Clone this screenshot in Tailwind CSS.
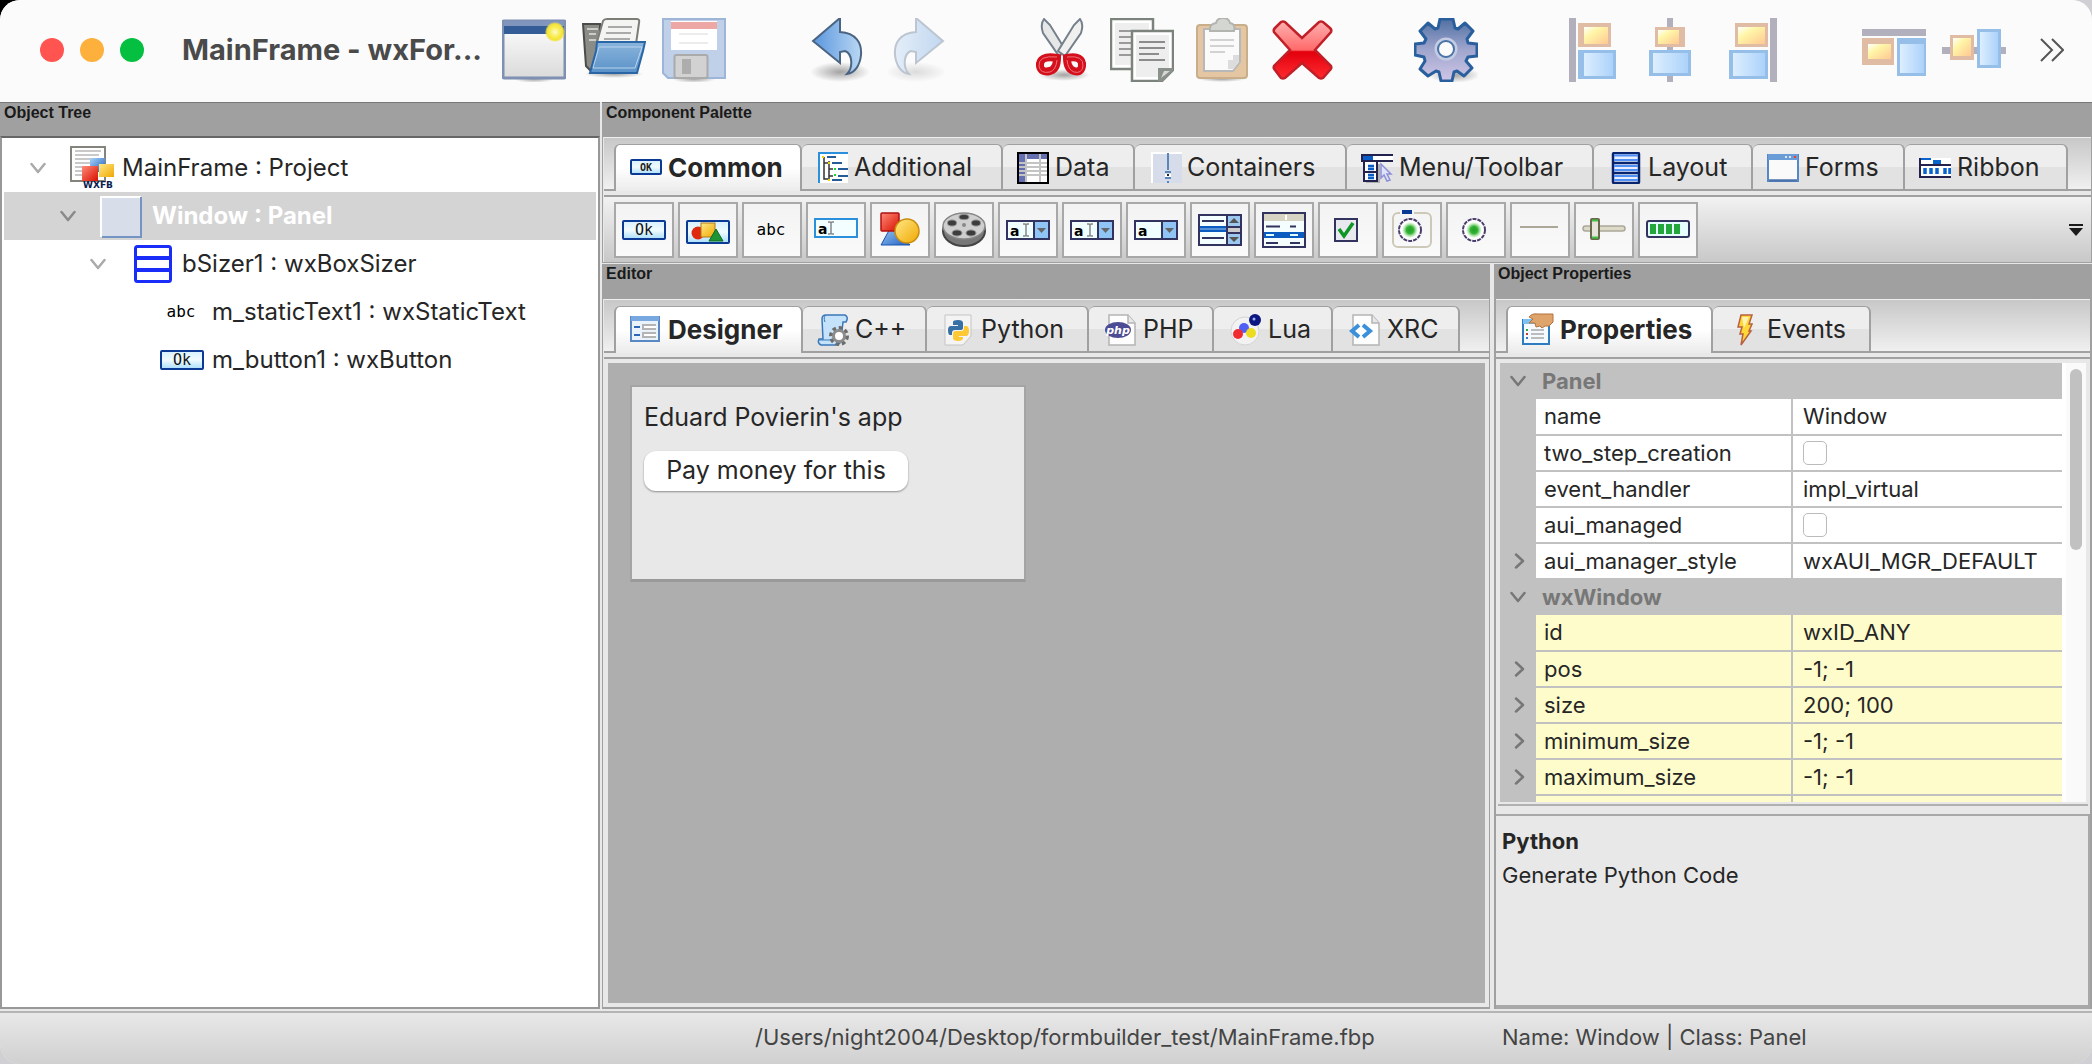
<!DOCTYPE html>
<html lang="en">
<head>
<meta charset="utf-8">
<title>MainFrame - wxFormBuilder</title>
<script src="https://cdn.jsdelivr.net/npm/@tailwindcss/browser@4"></script>
</head>
<body class="h-screen overflow-hidden bg-[radial-gradient(circle_at_0_0,#000_0_40px,#d0d0d4_60px)] font-['Inter',sans-serif] text-[#262626]">

<!-- Shared glyphs and gradients -->
<svg class="absolute h-0 w-0" aria-hidden="true">
  <defs>
    <linearGradient id="blu" x1="0" y1="0" x2="0" y2="1"><stop offset="0" stop-color="#d6f0ff"/><stop offset=".5" stop-color="#f0fbff"/><stop offset="1" stop-color="#a9defc"/></linearGradient>
    <linearGradient id="gry" x1="0" y1="0" x2="0" y2="1"><stop offset="0" stop-color="#ffffff"/><stop offset="1" stop-color="#dadada"/></linearGradient>
    <linearGradient id="fold" x1="0" y1="0" x2="0" y2="1"><stop offset="0" stop-color="#8ab4dc"/><stop offset="1" stop-color="#5a92c8"/></linearGradient>
    <linearGradient id="arr" x1="0" y1="0" x2="1" y2="0"><stop offset="0" stop-color="#5a96de"/><stop offset="1" stop-color="#b9d7f3"/></linearGradient>
    <linearGradient id="redx" x1="0" y1="0" x2="0" y2="1"><stop offset="0" stop-color="#ffb0b0"/><stop offset=".5" stop-color="#ff6a6a"/><stop offset=".53" stop-color="#e2000c"/><stop offset="1" stop-color="#ff2a30"/></linearGradient>
    <linearGradient id="gear" x1="0" y1="0" x2="0" y2="1"><stop offset="0" stop-color="#5070a2"/><stop offset=".5" stop-color="#a0a6ce"/><stop offset="1" stop-color="#cfc6e6"/></linearGradient>
    <linearGradient id="org" x1="0" y1="0" x2="1" y2="1"><stop offset="0" stop-color="#ffffff"/><stop offset=".35" stop-color="#fff6a8"/><stop offset="1" stop-color="#ffc892"/></linearGradient>
    <linearGradient id="sky" x1="0" y1="0" x2="1" y2="0"><stop offset="0" stop-color="#dceefe"/><stop offset="1" stop-color="#acd2fa"/></linearGradient>
    <linearGradient id="gold" x1="0" y1="0" x2="1" y2="1"><stop offset="0" stop-color="#ffe888"/><stop offset="1" stop-color="#f0a800"/></linearGradient>
    <linearGradient id="red" x1="0" y1="0" x2="1" y2="1"><stop offset="0" stop-color="#ff8a78"/><stop offset="1" stop-color="#d81000"/></linearGradient>
    <linearGradient id="azu" x1="0" y1="0" x2="1" y2="1"><stop offset="0" stop-color="#a8d4f8"/><stop offset="1" stop-color="#1c5cc0"/></linearGradient>
    <radialGradient id="shade"><stop offset="0" stop-color="#000" stop-opacity=".35"/><stop offset="1" stop-color="#000" stop-opacity="0"/></radialGradient>
    <radialGradient id="sun"><stop offset="0" stop-color="#fffbd0"/><stop offset=".5" stop-color="#f8ec50"/><stop offset=".8" stop-color="#f4e23a"/><stop offset="1" stop-color="#f4e23a" stop-opacity=".2"/></radialGradient>
    <radialGradient id="led"><stop offset="0" stop-color="#1fa024"/><stop offset=".45" stop-color="#35b235"/><stop offset=".75" stop-color="#b4e8b0"/><stop offset="1" stop-color="#ffffff"/></radialGradient>
    <symbol id="undo" viewBox="0 0 64 64">
      <ellipse cx="34" cy="54" rx="30" ry="10" fill="url(#shade)"/>
      <path d="M7 23 34 0V14C50 15 56 25 55 37 54 47 49 55 41 56 47 50 47 36 39 33L34 34V45Z" fill="url(#arr)" stroke="#4a6482" stroke-width="2"/>
    </symbol>
    <symbol id="okbtn" viewBox="0 0 44 20">
      <rect x="1" y="1" width="42" height="18" rx="1" fill="url(#blu)" stroke="#0a3a94" stroke-width="2"/>
      <text x="22" y="15" text-anchor="middle" font-family="DejaVu Sans Mono, monospace" font-size="15" fill="#111">Ok</text>
    </symbol>
    <symbol id="combo" viewBox="0 0 44 20">
      <rect x="1" y="1" width="42" height="18" fill="#f0feff" stroke="#33335f" stroke-width="2"/>
      <rect x="29" y="2" width="13" height="16" fill="#8fc4f4"/><path d="M28 1V19" stroke="#33335f" stroke-width="2"/>
      <path d="M31 8H40L35.500 13Z" fill="#666"/>
      <text x="4" y="16" font-family="DejaVu Sans, sans-serif" font-weight="700" font-size="14" fill="#000">a</text>
    </symbol>
    <symbol id="ibeam" viewBox="0 0 8 14"><path d="M1 1H3L4 2 5 1H7M4 2V12M1 13H3L4 12 5 13H7" fill="none" stroke="#888" stroke-width="1.500"/></symbol>
    <symbol id="radio" viewBox="0 0 24 24"><circle cx="12" cy="12" r="11" fill="#fff" stroke="#4b3e6c" stroke-width="2" stroke-dasharray="4 1"/><circle cx="12" cy="12" r="8" fill="url(#led)"/></symbol>
    <symbol id="down" viewBox="0 0 16 16"><path d="M1.500 4 8 12 14.500 4" fill="none" stroke="currentColor" stroke-width="2.500" stroke-linecap="round" stroke-linejoin="round"/></symbol>
    <symbol id="right" viewBox="0 0 16 16"><path d="M4 1.500 11 8 4 14.500" fill="none" stroke="currentColor" stroke-width="2.500" stroke-linecap="round" stroke-linejoin="round"/></symbol>
    <symbol id="doc" viewBox="0 0 32 32"><path d="M4 1H23L30 9V31H4Z" fill="#fdfdfd" stroke="#b4b4b4" stroke-width="1.500"/><path d="M23 1V9H30" fill="#e8e8e8" stroke="#b4b4b4" stroke-width="1.500"/></symbol>
  </defs>
</svg>

<div class="flex h-full flex-col overflow-hidden rounded-[20px] bg-[#e8e8e8]">

  <!-- Title bar -->
  <header class="flex h-[102px] shrink-0 items-center bg-[#fbfbfb] pr-6 pl-10 pb-0.5">
    <div class="flex gap-4">
      <button aria-label="Close" class="size-6 rounded-full bg-[#ff5450]"></button>
      <button aria-label="Minimize" class="size-6 rounded-full bg-[#fdb03c]"></button>
      <button aria-label="Zoom" class="size-6 rounded-full bg-[#05c040]"></button>
    </div>
    <h1 class="ml-[38px] w-[320px] text-[29px] font-bold text-[#4a4a4a]">MainFrame - wxFor...</h1>
    <nav aria-label="Main toolbar" class="flex flex-1 gap-20">
      <div class="flex gap-4">
        <button aria-label="New"><svg class="size-16" viewBox="0 0 64 64"><ellipse cx="32" cy="61" rx="20" ry="4" fill="url(#shade)"/><rect x="1" y="3" width="62" height="57" rx="1" fill="url(#gry)" stroke="#7f90b2" stroke-width="3"/><rect x="2" y="3" width="60" height="5" fill="#8096bd"/><rect x="2" y="8" width="60" height="8" fill="#345c96"/><circle cx="53" cy="14" r="10" fill="url(#sun)"/></svg></button>
        <button aria-label="Open"><svg class="size-16" viewBox="0 0 64 64"><ellipse cx="32" cy="56" rx="30" ry="4" fill="url(#shade)"/><path d="M1 6H18V24L9 53 4 48Z" fill="#8c8c86" stroke="#4c4c4c" stroke-width="2"/><path d="M5 11H16M7 16H14M7 22H14" stroke="#ccc" stroke-width="2"/><path d="M15 24 21 3Q22 1 25 1H55Q58 1 57 5L54 26Z" fill="#f4f4f2" stroke="#7d7d78" stroke-width="2"/><path d="M26 9H50M24 15H49M22 21H48" stroke="#aaa" stroke-width="2"/><path d="M15 24H63L61 33 55 55H8L14 33Z" fill="url(#fold)" stroke="#2a66a6" stroke-width="2"/><path d="M17 29H60L53 50H11Z" fill="none" stroke="#b8d4ec" stroke-width="1"/></svg></button>
        <button aria-label="Save"><svg class="size-16" viewBox="0 0 64 64"><ellipse cx="32" cy="61" rx="22" ry="4" fill="url(#shade)"/><path d="M1 1H63V60H6L1 55Z" fill="#bfd0e8" stroke="#9db6d8" stroke-width="2"/><rect x="9" y="3" width="46" height="29" fill="#fff"/><rect x="9" y="4" width="46" height="7" fill="#eda8a6"/><path d="M17 16H46M17 25H46" stroke="#ececec" stroke-width="2"/><rect x="12.500" y="37" width="33" height="23" rx="2" fill="#d2d2d2" stroke="#aaa" stroke-width="2"/><rect x="20" y="41" width="9" height="15" fill="#adadad"/></svg></button>
      </div>
      <div class="flex gap-4">
        <button aria-label="Undo"><svg class="size-16"><use href="#undo"/></svg></button>
        <button aria-label="Redo" disabled class="opacity-35"><svg class="size-16 -scale-x-100"><use href="#undo"/></svg></button>
      </div>
      <div class="flex gap-4">
        <button aria-label="Cut"><svg class="size-16" viewBox="0 0 64 64"><ellipse cx="34" cy="57" rx="26" ry="6" fill="url(#shade)"/><path d="M14 1Q10 6 13 15L29 38 36 33 20 7Z" fill="#e6e8e8" stroke="#75808c" stroke-width="2"/><path d="M50 1Q54 6 51 15L35 38 28 33 44 7Z" fill="#f0f0ee" stroke="#75808c" stroke-width="2"/><g fill="none" stroke="#d4101c" stroke-width="8"><path d="M27 40Q9 37 10 48 11 55 20 53 27 51 27 40Z"/><path d="M37 40Q53 37 52 48 51 55 44 53 37 51 37 40Z"/></g><g fill="none" stroke="#f0727a" stroke-width="1"><path d="M27 39Q8 37 9 48 10 56 20 54 26 52 27 42"/><path d="M37 39Q54 37 53 48 52 56 44 54 38 52 37 42"/></g></svg></button>
        <button aria-label="Copy"><svg class="size-16" viewBox="0 0 64 64"><rect x="1" y="1" width="42" height="50" fill="#fff" stroke="#7c827c" stroke-width="2.500"/><rect x="5" y="5" width="34" height="42" fill="#eee"/><path d="M9 13H34M9 19H34M9 25H34M9 31H34M9 37H34" stroke="#9a9a9a" stroke-width="2"/><path d="M22 13H63V52L52 63H22Z" fill="#fff" stroke="#7c827c" stroke-width="2.500"/><path d="M26 17H59V50H48V59H26Z" fill="#eee"/><path d="M29 24H55M29 30H55M29 36H49M29 42H55" stroke="#8c8c8c" stroke-width="2"/><path d="M48 63V50H63V53L53 63Z" fill="#8a908a"/><path d="M51 60 54 53H60Z" fill="#d8d8d8"/></svg></button>
        <button aria-label="Paste"><svg class="size-16" viewBox="0 0 64 64"><ellipse cx="32" cy="61" rx="24" ry="3" fill="url(#shade)"/><rect x="7" y="7" width="50" height="53" rx="3" fill="#e4c6a2" stroke="#c8ae8a" stroke-width="2"/><path d="M14 11H50V44L43 53H14Z" fill="#fafafa" stroke="#b8b8b8" stroke-width="2"/><path d="M20 22H44M20 28H44M20 34H35" stroke="#d2d2d2" stroke-width="2"/><path d="M38 51V42H43V37H49V44L43 51Z" fill="#dcdcdc"/><path d="M20 13Q19 6 26 5 27 0 33 0 39 0 40 5 46 6 44 13Z" fill="#d4d6d2" stroke="#b2b4b0" stroke-width="2"/></svg></button>
        <button aria-label="Delete"><svg class="size-16" viewBox="0 0 64 64"><path d="M4 14Q3 12 5 10L11 4Q13 3 15 4L32 20 49 4Q51 3 53 4L60 10Q62 12 61 14L45 32 61 48Q62 50 60 52L53 60Q51 61 49 60L32 45 15 60Q13 61 11 60L5 52Q3 50 4 48L20 32Z" fill="url(#redx)" stroke="#c02028" stroke-width="2.500"/></svg></button>
      </div>
      <div class="flex">
        <button aria-label="Generate code"><svg class="size-16" viewBox="0 0 64 64"><ellipse cx="40" cy="57" rx="26" ry="8" fill="url(#shade)"/><path d="M26 1H39L41 10 44 11 51 5 59 13 53 21 54 25 63 26V38L54 39 52 43 58 50 50 58 43 53 40 54 38 63H27L25 54 22 53 14 58 6 51 11 43 10 39 1 37V26L10 25 12 21 6 13 14 5 21 11 24 10Z" fill="url(#gear)" stroke="#2a5f9e" stroke-width="3" stroke-linejoin="round"/><circle cx="32" cy="31" r="10" fill="none" stroke="#c4cce4" stroke-width="3"/><circle cx="32" cy="31" r="8" fill="#fbfbfb" stroke="#4a74a8" stroke-width="2"/></svg></button>
      </div>
      <div class="flex gap-4">
        <button aria-label="Align left"><svg class="size-16" viewBox="0 0 64 64"><rect x="11" width="7" height="64" fill="#b2b0bd"/><rect x="20" y="5" width="33" height="24" fill="#e0bca4"/><rect x="26" y="9" width="24" height="17" fill="url(#org)"/><rect x="20" y="32" width="38" height="29" fill="#95bfe8"/><rect x="26" y="35" width="29" height="23" fill="url(#sky)"/></svg></button>
        <button aria-label="Align centre"><svg class="size-16" viewBox="0 0 64 64"><rect x="29" width="6" height="64" fill="#b2b0bd"/><rect x="17" y="9" width="30" height="20" fill="#e0bca4"/><rect x="20" y="12" width="21" height="14" fill="url(#org)"/><rect x="11" y="32" width="42" height="26" fill="#95bfe8"/><rect x="15" y="35" width="35" height="20" fill="url(#sky)"/></svg></button>
        <button aria-label="Align right"><svg class="size-16" viewBox="0 0 64 64"><rect x="52" width="7" height="64" fill="#b2b0bd"/><rect x="17" y="5" width="33" height="24" fill="#e0bca4"/><rect x="20" y="9" width="27" height="17" fill="url(#org)"/><rect x="11" y="32" width="39" height="29" fill="#95bfe8"/><rect x="15" y="35" width="32" height="23" fill="url(#sky)"/></svg></button>
      </div>
      <div class="flex gap-4">
        <button aria-label="Align top"><svg class="size-16" viewBox="0 0 64 64"><rect y="11" width="64" height="7" fill="#b2b0bd"/><rect y="20" width="32" height="27" fill="#e0bca4"/><rect x="6" y="26" width="23" height="15" fill="url(#org)"/><rect x="35" y="20" width="29" height="38" fill="#95bfe8"/><rect x="38" y="26" width="24" height="29" fill="url(#sky)"/></svg></button>
        <button aria-label="Align middle"><svg class="size-16" viewBox="0 0 64 64"><rect y="29" width="64" height="7" fill="#b2b0bd"/><rect x="8" y="17" width="24" height="25" fill="#e0bca4"/><rect x="11" y="20" width="18" height="18" fill="url(#org)"/><rect x="35" y="11" width="24" height="39" fill="#95bfe8"/><rect x="38" y="14" width="18" height="33" fill="url(#sky)"/></svg></button>
      </div>
    </nav>
    <button aria-label="More tools" class="mr-1"><svg class="h-6 w-6" viewBox="0 0 24 24"><path d="M1 1 12 12 1 23M12 1 23 12 12 23" fill="none" stroke="#555" stroke-width="2"/></svg></button>
  </header>

  <main class="flex min-h-0 flex-1">

    <!-- Object tree -->
    <section class="flex w-[600px] shrink-0 flex-col">
      <h2 class="h-[34px] shrink-0 border-t border-[#777] bg-[#a0a0a0] pl-1 font-['Liberation_Sans',sans-serif] text-base/5 font-bold text-[#1a1a1a]">Object Tree</h2>
      <ul class="mb-0.5 flex-1 border-2 border-[#989898] border-t-[#666] bg-white px-0.5 pt-1.5 text-2xl">
        <li class="flex h-12 items-center gap-2 pl-[26px]"><svg class="mr-4 size-4 text-[#aaa]"><use href="#down"/></svg>
          <svg class="size-11" viewBox="0 0 44 44"><rect x="1" y="1" width="34" height="34" fill="#fff" stroke="#84847c" stroke-width="2"/><path d="M5 5H31M5 9H29M5 13H31M5 17H24M5 21H22M5 25H14M5 29H14" stroke="#b8b8b8" stroke-width="1.500"/><rect x="20" y="12" width="15" height="14" fill="url(#azu)"/><rect x="12" y="20" width="16" height="15" fill="url(#red)"/><rect x="29" y="18" width="15" height="13" fill="url(#gold)"/><text x="28" y="42" text-anchor="middle" font-family="DejaVu Sans, sans-serif" font-weight="700" font-size="9" fill="#0a1e50">WXFB</text></svg>
          <span>MainFrame : Project</span></li>
        <li class="flex h-12 items-center gap-2 bg-[#d4d4d4] pl-14 font-bold text-white"><svg class="mr-4 size-4 text-[#8a8a8a]"><use href="#down"/></svg>
          <svg class="size-11" viewBox="0 0 44 44"><rect x="1" y="3" width="40" height="40" fill="#d8dee9"/><path d="M1 43V3H41" fill="none" stroke="#fff" stroke-width="2"/><path d="M41 3V43H2" fill="none" stroke="#7495c4" stroke-width="2"/></svg>
          <span>Window : Panel</span></li>
        <li class="flex h-12 items-center gap-2 pl-[86px]"><svg class="mr-4 size-4 text-[#aaa]"><use href="#down"/></svg>
          <svg class="size-11" viewBox="0 0 44 44"><rect x="5.500" y="4.500" width="35" height="35" rx="2" fill="#fff" stroke="#1a2cf8" stroke-width="3"/><path d="M5 16H40M5 28H40" stroke="#1a2cf8" stroke-width="4"/></svg>
          <span>bSizer1 : wxBoxSizer</span></li>
        <li class="flex h-12 items-center gap-2 pl-[156px]">
          <svg class="size-11" viewBox="0 0 44 44"><text x="21" y="27" text-anchor="middle" font-family="DejaVu Sans Mono, monospace" font-size="16" fill="#000">abc</text></svg>
          <span>m_staticText1 : wxStaticText</span></li>
        <li class="flex h-12 items-center gap-2 pl-[156px]">
          <svg class="h-5 w-11"><use href="#okbtn"/></svg>
          <span>m_button1 : wxButton</span></li>
      </ul>
    </section>

    <div class="ml-0.5 flex min-w-0 flex-1 flex-col">

      <!-- Component palette -->
      <section class="shrink-0">
        <h2 class="h-[35px] border-t border-[#777] bg-[#a0a0a0] pl-1 font-['Liberation_Sans',sans-serif] text-base/5 font-bold text-[#1a1a1a]">Component Palette</h2>
        <div class="border-x border-b border-[#a0a0a0] pl-px">
          <div role="tablist" class="flex h-[54px] items-end border-t border-b-2 border-t-[#eee] border-b-[#a0a0a0] bg-linear-to-b from-[#c8c8c8] to-[#f0f0f0] pl-2.5 text-[25px]">
            <button role="tab" aria-selected="true" class="-mb-0.5 flex h-[47px] w-[188px] items-center gap-1.5 rounded-t-md border-x-2 border-t border-[#a0a0a0] bg-linear-to-b from-white from-50% to-[#ebebeb] pb-0.5 pl-3.5 text-[26px] font-bold"><svg class="h-4 w-8" viewBox="0 0 32 16"><rect x="1" y="1" width="30" height="14" rx="1" fill="url(#blu)" stroke="#0a3a94" stroke-width="2"/><text x="16" y="12" text-anchor="middle" font-family="DejaVu Sans Mono, monospace" font-size="10" fill="#222">OK</text></svg>Common</button>
            <button role="tab" class="flex h-[45px] w-[201px] items-center gap-1 rounded-t-md border-t border-r-2 border-[#a0a0a0] bg-linear-to-b from-[#eee] from-50% to-[#e2e2e2] to-50% pt-0.5 pl-4"><svg class="size-8" viewBox="0 0 32 32"><path d="M0 0H30V31H0Z" fill="#fff"/><path d="M1 31V1H30" fill="none" stroke="#2b90dc" stroke-width="2"/><path d="M6 5V27H10M6 11H10M11 9V27M11 17H15M11 24H15" fill="none" stroke="#333" stroke-width="1.500"/><path d="M9 5H18M14 11H24M20 17H30M20 24H30M14 28H24" stroke="#245c98" stroke-width="2"/><path d="M4 5H6M10 11H12M10 28H12" stroke="#e8d800" stroke-width="2"/><path d="M16 17H18M16 23H18" stroke="#18d840" stroke-width="2"/></svg>Additional</button>
            <button role="tab" class="flex h-[45px] w-[132px] items-center gap-1.5 rounded-t-md border-t border-r-2 border-[#a0a0a0] bg-linear-to-b from-[#eee] from-50% to-[#e2e2e2] to-50% pt-0.5 pl-3.5"><svg class="size-8" viewBox="0 0 32 32"><rect x="1" y="1" width="30" height="30" fill="#fff" stroke="#000" stroke-width="2"/><path d="M2 2H30V7H8V30H2Z" fill="#6470b0"/><path d="M2 11H30M2 15H30M2 19H30M2 23H30M9 2V30M23 2V30" stroke="#c4c4c4" stroke-width="2"/></svg>Data</button>
            <button role="tab" class="flex h-[45px] w-[212px] items-center gap-1 rounded-t-md border-t border-r-2 border-[#a0a0a0] bg-linear-to-b from-[#eee] from-50% to-[#e2e2e2] to-50% pt-0.5 pl-4"><svg class="size-8" viewBox="0 0 32 32"><rect x="1" y="1" width="30" height="30" fill="#d6dce9"/><path d="M1 31V1H31" stroke="#fff" stroke-width="2" fill="none"/><path d="M17 1V18M14 20H20M14 26H20M17 29V31" stroke="#5a86b8" stroke-width="2"/><rect x="14" y="22" width="6" height="3" fill="#fff"/><rect x="16" y="22" width="2" height="2" fill="#223"/></svg>Containers</button>
            <button role="tab" class="flex h-[45px] w-[247px] items-center gap-1.5 rounded-t-md border-t border-r-2 border-[#a0a0a0] bg-linear-to-b from-[#eee] from-50% to-[#e2e2e2] to-50% pt-0.5 pl-3.5"><svg class="size-8" viewBox="0 0 32 32"><rect x="1" y="3" width="31" height="6" fill="#fff"/><path d="M32 3H1V9H32" fill="none" stroke="#22224c" stroke-width="2"/><rect x="2" y="4" width="10" height="4" fill="#0a5cc8"/><path d="M5 30H18V12" fill="none" stroke="#b0b0b0" stroke-width="2"/><rect x="3" y="9" width="13" height="20" fill="#fff" stroke="#22224c" stroke-width="2"/><path d="M7 14H13M7 17H13M7 23H13M7 26H13" stroke="#0a5cc8" stroke-width="2.500"/><path d="M3 20H16" stroke="#22224c" stroke-width="2"/><path d="M20 12V26L23 23 26 29 29 28 26 22H30Z" fill="#dfe2fa" stroke="#8b8fd6" stroke-width="1.500"/></svg>Menu/Toolbar</button>
            <button role="tab" class="flex h-[45px] w-[159px] items-center gap-1.5 rounded-t-md border-t border-r-2 border-[#a0a0a0] bg-linear-to-b from-[#eee] from-50% to-[#e2e2e2] to-50% pt-0.5 pl-4"><svg class="size-8" viewBox="0 0 32 32"><rect x="3" y="1" width="26" height="30" rx="1" fill="#e8f0ff" stroke="#08246e" stroke-width="2.500"/><path d="M4 3.500H28M4 8H28M4 14H28M4 18H28M4 24H28M4 28H28" stroke="#5090f4" stroke-width="2"/><path d="M3 11H29M3 21H29" stroke="#08246e" stroke-width="2.500"/></svg>Layout</button>
            <button role="tab" class="flex h-[45px] w-[152px] items-center gap-1.5 rounded-t-md border-t border-r-2 border-[#a0a0a0] bg-linear-to-b from-[#eee] from-50% to-[#e2e2e2] to-50% pt-0.5 pl-3.5"><svg class="size-8" viewBox="0 0 32 32"><rect x="1" y="3" width="30" height="26" fill="#fafafa" stroke="#5588c8" stroke-width="2"/><rect x="1" y="2" width="30" height="6" fill="#6a9cd8"/><path d="M18 5H20M22 5H24" stroke="#dde8f6" stroke-width="2"/><path d="M27 5H29" stroke="#f04030" stroke-width="2"/><path d="M2 28.500H30" stroke="#4c74ac" stroke-width="2.500"/></svg>Forms</button>
            <button role="tab" class="flex h-[45px] w-[163px] items-center gap-1.5 rounded-t-md border-t border-r-2 border-[#a0a0a0] bg-linear-to-b from-[#eee] from-50% to-[#e2e2e2] to-50% pt-0.5 pl-3.5"><svg class="size-8" viewBox="0 0 32 32"><rect y="6" width="32" height="20" fill="#fff"/><path d="M32 13H1V25H32M1 6V13" fill="none" stroke="#22224c" stroke-width="2"/><path d="M2 7H12" stroke="#0a64d0" stroke-width="2"/><rect x="14" y="8" width="8" height="4" fill="#0a64d0"/><path d="M6 16V22M12 16V22M18 16V22M26 16V22M31 16V22" stroke="#0a64d0" stroke-width="3.500"/></svg>Ribbon</button>
          </div>
          <div class="mt-1 flex h-[67px] items-center gap-1 border-t-2 border-[#a0a0a0] bg-linear-to-b from-[#f2f2f2] to-[#c8c8c8] pr-2 pl-2.5">
            <button aria-label="wxButton" class="grid h-14 w-15 place-items-center border-2 border-[#a8a8a8] bg-linear-to-b from-[#f3f3f3] to-[#fafafa]"><svg class="h-5 w-11"><use href="#okbtn"/></svg></button>
            <button aria-label="wxBitmapButton" class="grid h-14 w-15 place-items-center border-2 border-[#a8a8a8] bg-linear-to-b from-[#f3f3f3] to-[#fafafa]"><svg class="size-11" viewBox="0 0 44 44"><rect x="1" y="13" width="42" height="22" rx="1" fill="url(#blu)" stroke="#0a3a94" stroke-width="2"/><circle cx="12" cy="25" r="6.500" fill="#e02810"/><rect x="15" y="15" width="14" height="14" fill="url(#gold)" stroke="#b07818"/><path d="M30 21 37 33H23Z" fill="#1f9434" stroke="#0f6a20"/></svg></button>
            <button aria-label="wxStaticText" class="grid h-14 w-15 place-items-center border-2 border-[#a8a8a8] bg-linear-to-b from-[#f3f3f3] to-[#fafafa]"><svg class="size-11" viewBox="0 0 44 44"><text x="21" y="27" text-anchor="middle" font-family="DejaVu Sans Mono, monospace" font-size="16" fill="#000">abc</text></svg></button>
            <button aria-label="wxTextCtrl" class="grid h-14 w-15 place-items-center border-2 border-[#a8a8a8] bg-linear-to-b from-[#f3f3f3] to-[#fafafa]"><svg class="size-11" viewBox="0 0 44 44"><rect x="1" y="11" width="42" height="18" fill="#f2feff" stroke="#2b90dc" stroke-width="2"/><text x="4" y="26" font-family="DejaVu Sans, sans-serif" font-weight="700" font-size="14" fill="#000">a</text><use href="#ibeam" x="13" y="13" width="8" height="14"/></svg></button>
            <button aria-label="wxStaticBitmap" class="grid h-14 w-15 place-items-center border-2 border-[#a8a8a8] bg-linear-to-b from-[#f3f3f3] to-[#fafafa]"><svg class="size-11" viewBox="0 0 44 44"><path d="M14 17 3 37H32Z" fill="url(#azu)" stroke="#1c54b0"/><rect x="3" y="5" width="18" height="18" rx="1" fill="url(#red)" stroke="#b01010" stroke-width="1.500"/><circle cx="29" cy="23" r="12" fill="url(#gold)" stroke="#c88c10" stroke-width="1.500"/></svg></button>
            <button aria-label="wxAnimationCtrl" class="grid h-14 w-15 place-items-center border-2 border-[#a8a8a8] bg-linear-to-b from-[#f3f3f3] to-[#fafafa]"><svg class="size-11" viewBox="0 0 44 44"><ellipse cx="22" cy="23" rx="21" ry="15" fill="#777" stroke="#444" stroke-width="2"/><ellipse cx="22" cy="18" rx="21" ry="13" fill="#cfcfcf" stroke="#888" stroke-width="1.500"/><g fill="#3c3c3c" stroke="#8c8c8c"><ellipse cx="22" cy="9" rx="5" ry="2.500"/><ellipse cx="10" cy="15" rx="4.500" ry="3"/><ellipse cx="34" cy="15" rx="4.500" ry="3"/><ellipse cx="15" cy="25" rx="5" ry="3"/><ellipse cx="29" cy="25" rx="5" ry="3"/></g><circle cx="22" cy="17" r="2" fill="#888"/></svg></button>
            <button aria-label="wxComboBox" class="grid h-14 w-15 place-items-center border-2 border-[#a8a8a8] bg-linear-to-b from-[#f3f3f3] to-[#fafafa]"><svg class="size-11" viewBox="0 0 44 44"><use href="#combo" y="12" width="44" height="20"/><use href="#ibeam" x="16" y="15" width="8" height="14"/></svg></button>
            <button aria-label="wxBitmapComboBox" class="grid h-14 w-15 place-items-center border-2 border-[#a8a8a8] bg-linear-to-b from-[#f3f3f3] to-[#fafafa]"><svg class="size-11" viewBox="0 0 44 44"><use href="#combo" y="12" width="44" height="20"/><use href="#ibeam" x="16" y="15" width="8" height="14"/></svg></button>
            <button aria-label="wxChoice" class="grid h-14 w-15 place-items-center border-2 border-[#a8a8a8] bg-linear-to-b from-[#f3f3f3] to-[#fafafa]"><svg class="size-11" viewBox="0 0 44 44"><use href="#combo" y="12" width="44" height="20"/></svg></button>
            <button aria-label="wxListBox" class="grid h-14 w-15 place-items-center border-2 border-[#a8a8a8] bg-linear-to-b from-[#f3f3f3] to-[#fafafa]"><svg class="size-11" viewBox="0 0 44 44"><rect x="1" y="7" width="42" height="30" fill="#f2feff" stroke="#33335f" stroke-width="2"/><path d="M4 13H26M4 30H26" stroke="#33335f" stroke-width="2"/><rect x="2" y="18" width="26" height="6" fill="#0a5cc0"/><path d="M2 21H28" stroke="#a0c8f0"/><rect x="30" y="8" width="12" height="28" fill="#9cc8f0"/><rect x="30" y="19" width="12" height="5" fill="#ccc"/><path d="M29 7V37M29 19H43M29 25H43" stroke="#33335f" stroke-width="2"/><path d="M31 15H41L36 10ZM31 29H41L36 34Z" fill="#555"/></svg></button>
            <button aria-label="wxListCtrl" class="grid h-14 w-15 place-items-center border-2 border-[#a8a8a8] bg-linear-to-b from-[#f3f3f3] to-[#fafafa]"><svg class="size-11" viewBox="0 0 44 44"><rect x="1" y="5" width="42" height="34" fill="#f4feff" stroke="#33335f" stroke-width="2"/><rect x="2" y="6" width="40" height="7" fill="#d8d4c4"/><path d="M24 7V12" stroke="#fff" stroke-width="2"/><path d="M4 18.500H18M28 18.500H34M4 35H16M28 35H38" stroke="#33335f" stroke-width="2"/><rect x="2" y="24" width="40" height="6" fill="#0a5cc0"/><path d="M4 27H12M28 27H36" stroke="#dff" stroke-width="2"/></svg></button>
            <button aria-label="wxCheckBox" class="grid h-14 w-15 place-items-center border-2 border-[#a8a8a8] bg-linear-to-b from-[#f3f3f3] to-[#fafafa]"><svg class="size-11" viewBox="0 0 44 44"><rect x="9" y="11" width="22" height="22" fill="#e8e8ee" stroke="#33335f" stroke-width="2"/><path d="M13 21 18 28 27 15" fill="none" stroke="#0f9426" stroke-width="3.500"/></svg></button>
            <button aria-label="wxRadioBox" class="grid h-14 w-15 place-items-center border-2 border-[#a8a8a8] bg-linear-to-b from-[#f3f3f3] to-[#fafafa]"><svg class="size-11" viewBox="0 0 44 44"><rect x="3" y="5" width="38" height="34" rx="5" fill="none" stroke="#cdc9b8" stroke-width="2"/><rect x="10" y="2" width="14" height="5" fill="#f4f4f4"/><rect x="12" y="2" width="10" height="4" fill="#0a3a94"/><use href="#radio" x="8" y="10" width="24" height="24"/></svg></button>
            <button aria-label="wxRadioButton" class="grid h-14 w-15 place-items-center border-2 border-[#a8a8a8] bg-linear-to-b from-[#f3f3f3] to-[#fafafa]"><svg class="size-11" viewBox="0 0 44 44"><use href="#radio" x="8" y="10" width="24" height="24"/></svg></button>
            <button aria-label="wxStaticLine" class="grid h-14 w-15 place-items-center border-2 border-[#a8a8a8] bg-linear-to-b from-[#f3f3f3] to-[#fafafa]"><svg class="size-11" viewBox="0 0 44 44"><path d="M2 19H40" stroke="#aca899" stroke-width="2"/></svg></button>
            <button aria-label="wxSlider" class="grid h-14 w-15 place-items-center border-2 border-[#a8a8a8] bg-linear-to-b from-[#f3f3f3] to-[#fafafa]"><svg class="size-11" viewBox="0 0 44 44"><rect x="1" y="18" width="42" height="5" rx="2.500" fill="#dedac8" stroke="#aca899" stroke-width="1.500"/><rect x="9" y="11" width="8" height="20" rx="1" fill="#e6e4d8" stroke="#68684c" stroke-width="2"/><path d="M10 12.500H16M10 29.500H16" stroke="#44c044" stroke-width="2"/></svg></button>
            <button aria-label="wxGauge" class="grid h-14 w-15 place-items-center border-2 border-[#a8a8a8] bg-linear-to-b from-[#f3f3f3] to-[#fafafa]"><svg class="size-11" viewBox="0 0 44 44"><rect x="1" y="13" width="42" height="16" rx="2" fill="#e6fdff" stroke="#33335f" stroke-width="2"/><path d="M7 16V26M15 16V26M23 16V26M31 16V26" stroke="#22a83a" stroke-width="6"/></svg></button>
            <button aria-label="Toolbar overflow" class="ml-auto"><svg class="h-3 w-3.5" viewBox="0 0 14 12"><path d="M0 0H14V2H0ZM0 4H14L7 12Z" fill="#1a1a1a"/></svg></button>
          </div>
        </div>
      </section>

      <div class="flex min-h-0 flex-1 pt-px">

        <!-- Editor -->
        <section class="flex min-w-0 flex-1 flex-col pb-0.5">
          <h2 class="h-[35px] shrink-0 bg-[#a0a0a0] pl-1 font-['Liberation_Sans',sans-serif] text-base/5 font-bold text-[#1a1a1a]">Editor</h2>
          <div class="flex min-h-0 flex-1 flex-col border-x border-b-2 border-[#a0a0a0] pl-px">
            <div role="tablist" class="flex h-[54px] shrink-0 items-end border-t border-b-2 border-t-[#eee] border-b-[#a0a0a0] bg-linear-to-b from-[#c8c8c8] to-[#f0f0f0] pl-2.5 text-[25px]">
              <button role="tab" aria-selected="true" class="-mb-0.5 flex h-[47px] w-[189px] items-center gap-1.5 rounded-t-md border-x-2 border-t border-[#a0a0a0] bg-linear-to-b from-white from-50% to-[#ebebeb] pb-0.5 pl-3.5 text-[26px] font-bold"><svg class="size-8" viewBox="0 0 32 32"><rect x="1" y="4" width="28" height="24" fill="#eaf2fb" stroke="#5a88c4" stroke-width="2"/><rect x="1" y="3" width="28" height="5" fill="#78a8e0"/><path d="M4 14H10M4 22H10" stroke="#2c68b8" stroke-width="2"/><path d="M26 12H13V16H26M26 20H13V24H26" fill="#fff" stroke="#b4b4b4" stroke-width="2"/></svg>Designer</button>
              <button role="tab" class="flex h-[45px] w-[124px] items-center gap-1.5 rounded-t-md border-t border-r-2 border-[#a0a0a0] bg-linear-to-b from-[#eee] from-50% to-[#e2e2e2] to-50% pt-0.5 pl-3.5"><svg class="size-8" viewBox="0 0 32 32"><path d="M5 5Q5 1 9 1H28Q32 3 29 8H26L24 26Q23 31 18 31H4Q0 29 2 25H6Z" fill="#c4e2fa" stroke="#3a78b8" stroke-width="1.500"/><path d="M9 1Q6 3 8 8M2 26H15" stroke="#3a78b8" fill="none"/><circle cx="22" cy="22" r="8" fill="none" stroke="#6c6c6c" stroke-width="4" stroke-dasharray="3.500 2.700"/><circle cx="22" cy="22" r="5.500" fill="#fff" stroke="#8c8c8c" stroke-width="3"/></svg>C++</button>
              <button role="tab" class="flex h-[45px] w-[162px] items-center gap-1.5 rounded-t-md border-t border-r-2 border-[#a0a0a0] bg-linear-to-b from-[#eee] from-50% to-[#e2e2e2] to-50% pt-0.5 pl-4"><svg class="size-8" viewBox="0 0 32 32"><path d="M2 1H28V22L20 31H2Z" fill="#f4f4f4" stroke="#c4c4c4"/><path d="M10 8Q10 6 15 6 20 6 20 9V14Q20 16 17 16H12Q9 16 9 19V21H7Q5 21 5 16 5 12 8 12H15V11H10Z" fill="#3670a4"/><path d="M20 24Q20 27 15 27 10 27 10 24V20Q10 17 13 17H18Q21 17 21 14V12H23Q26 12 26 17 26 22 23 22H16V23H20Z" fill="#ffc936"/></svg>Python</button>
              <button role="tab" class="flex h-[45px] w-[125px] items-center gap-1.5 rounded-t-md border-t border-r-2 border-[#a0a0a0] bg-linear-to-b from-[#eee] from-50% to-[#e2e2e2] to-50% pt-0.5 pl-4"><svg class="size-8" viewBox="0 0 32 32"><use href="#doc" width="32" height="32"/><ellipse cx="13" cy="16" rx="13" ry="8" fill="#4c4c94"/><text x="13" y="20" text-anchor="middle" font-family="DejaVu Sans, sans-serif" font-style="italic" font-weight="700" font-size="11" fill="#fff">php</text></svg>PHP</button>
              <button role="tab" class="flex h-[45px] w-[119px] items-center gap-1.5 rounded-t-md border-t border-r-2 border-[#a0a0a0] bg-linear-to-b from-[#eee] from-50% to-[#e2e2e2] to-50% pt-0.5 pl-4"><svg class="size-8" viewBox="0 0 32 32"><circle cx="15" cy="17" r="14" fill="#f2f2f2" stroke="#d4d4d4"/><circle cx="25" cy="6" r="6" fill="#0c1680"/><circle cx="24" cy="5" r="1.500" fill="#a0b0f0"/><circle cx="14" cy="14" r="5" fill="#5060f4"/><circle cx="8" cy="20" r="5" fill="#f02c30"/><circle cx="21" cy="19" r="5" fill="#eedc20"/></svg>Lua</button>
              <button role="tab" class="flex h-[45px] w-[127px] items-center gap-1.5 rounded-t-md border-t border-r-2 border-[#a0a0a0] bg-linear-to-b from-[#eee] from-50% to-[#e2e2e2] to-50% pt-0.5 pl-4"><svg class="size-8" viewBox="0 0 32 32"><use href="#doc" width="32" height="32"/><path d="M10 11 3 17 10 23M14 11 21 17 14 23" fill="none" stroke="#3b90dc" stroke-width="4"/></svg>XRC</button>
            </div>
            <div class="mt-1 flex min-h-0 flex-1 border-t-2 border-[#a0a0a0] pt-1 pr-1 pb-1 pl-1">
              <div class="flex-1 bg-[#aeaeae] px-[22px] py-[22px]">
                <div class="h-[197px] w-[396px] border-2 border-b-3 border-[#a4a4a4] border-b-[#999] bg-[#e8e8e8] px-3 pt-3">
                  <p class="text-[25px]/9">Eduard Povierin's app</p>
                  <button class="mt-4 h-10 w-[264px] rounded-xl bg-white text-[25px] shadow-[0_1px_2px_#0006]">Pay money for this</button>
                </div>
              </div>
            </div>
          </div>
        </section>

        <!-- Object properties -->
        <section class="ml-1 flex w-[598px] shrink-0 flex-col pb-0.5">
          <h2 class="h-[35px] shrink-0 bg-[#a0a0a0] pl-1 font-['Liberation_Sans',sans-serif] text-base/5 font-bold text-[#1a1a1a]">Object Properties</h2>
          <div class="flex min-h-0 flex-1 flex-col border-x-2 border-[#a0a0a0]">
            <div role="tablist" class="flex h-[54px] shrink-0 items-end border-t border-b-2 border-t-[#eee] border-b-[#a0a0a0] bg-linear-to-b from-[#c8c8c8] to-[#f0f0f0] pl-2.5 text-[25px]">
              <button role="tab" aria-selected="true" class="-mb-0.5 flex h-[47px] w-[207px] items-center gap-1.5 rounded-t-md border-x-2 border-t border-[#a0a0a0] bg-linear-to-b from-white from-50% to-[#ebebeb] pb-0.5 pl-3.5 text-[26px] font-bold"><svg class="size-8" viewBox="0 0 32 32"><rect x="1" y="7" width="26" height="24" fill="#f4faff" stroke="#2f7cc0" stroke-width="2"/><rect x="1" y="6" width="26" height="5" fill="#7ec0f0"/><path d="M4 17H6" stroke="#38a838" stroke-width="2"/><path d="M4 21H6" stroke="#c83838" stroke-width="2"/><path d="M4 25H6" stroke="#3878c8" stroke-width="2"/><path d="M9 17H22M9 21H22M9 25H22" stroke="#a8a8a8" stroke-width="1.500"/><path d="M7 4Q10 0 16 1H31V9L27 13H23L20 15 18 13 14 14 13 10H7L11 6Z" fill="#dfa36c" stroke="#b4743c"/></svg>Properties</button>
              <button role="tab" class="flex h-[45px] w-[158px] items-center gap-2 rounded-t-md border-t border-r-2 border-[#a0a0a0] bg-linear-to-b from-[#eee] from-50% to-[#e2e2e2] to-50% pt-0.5 pl-3.5"><svg class="size-8" viewBox="0 0 32 32"><path d="M14 1H25L22 10H25L22 17H24L14 31 16 20H13L15 13H11Z" fill="#ffd838" stroke="#b86040" stroke-width="1.500"/><path d="M15 3H22L17 14Z" fill="#fff2b0"/></svg>Events</button>
            </div>
            <div class="mt-1 flex min-h-0 flex-1 border-t-2 border-[#a0a0a0] pt-1 pr-1 pl-1">
              <div class="min-w-0 flex-1 overflow-hidden bg-[#c1c1c1]">
                <table class="w-full table-fixed border-collapse text-left text-[22px]">
                  <colgroup><col class="w-9"><col class="w-64"><col></colgroup>
                  <tbody>
                    <tr class="h-9 text-[#777]"><td class="pl-2.5"><svg class="size-4"><use href="#down"/></svg></td><th colspan="2" class="pl-1.5 font-bold">Panel</th></tr>
                    <tr class="h-9"><td></td><td class="border-r-2 border-b-2 border-[#c1c1c1] bg-white pl-2">name</td><td class="border-b-2 border-[#c1c1c1] bg-white pl-2.5">Window</td></tr>
                    <tr class="h-9"><td></td><td class="border-r-2 border-b-2 border-[#c1c1c1] bg-white pl-2"><label for="two">two_step_creation</label></td><td class="border-b-2 border-[#c1c1c1] bg-white pl-2.5"><input id="two" type="checkbox" class="block size-6 appearance-none rounded-[5px] border border-[#bbb] bg-white"></td></tr>
                    <tr class="h-9"><td></td><td class="border-r-2 border-b-2 border-[#c1c1c1] bg-white pl-2">event_handler</td><td class="border-b-2 border-[#c1c1c1] bg-white pl-2.5">impl_virtual</td></tr>
                    <tr class="h-9"><td></td><td class="border-r-2 border-b-2 border-[#c1c1c1] bg-white pl-2"><label for="aui">aui_managed</label></td><td class="border-b-2 border-[#c1c1c1] bg-white pl-2.5"><input id="aui" type="checkbox" class="block size-6 appearance-none rounded-[5px] border border-[#bbb] bg-white"></td></tr>
                    <tr class="h-9"><td class="pl-3 text-[#777]"><svg class="size-4"><use href="#right"/></svg></td><td class="border-r-2 border-b-2 border-[#c1c1c1] bg-white pl-2">aui_manager_style</td><td class="border-b-2 border-[#c1c1c1] bg-white pl-2.5">wxAUI_MGR_DEFAULT</td></tr>
                    <tr class="h-9 text-[#777]"><td class="pl-2.5"><svg class="size-4"><use href="#down"/></svg></td><th colspan="2" class="pl-1.5 font-bold">wxWindow</th></tr>
                    <tr class="h-9"><td></td><td class="border-r-2 border-b-2 border-[#c1c1c1] bg-[#fffccc] pl-2">id</td><td class="border-b-2 border-[#c1c1c1] bg-[#fffccc] pl-2.5">wxID_ANY</td></tr>
                    <tr class="h-9"><td class="pl-3 text-[#777]"><svg class="size-4"><use href="#right"/></svg></td><td class="border-r-2 border-b-2 border-[#c1c1c1] bg-[#fffccc] pl-2">pos</td><td class="border-b-2 border-[#c1c1c1] bg-[#fffccc] pl-2.5">-1; -1</td></tr>
                    <tr class="h-9"><td class="pl-3 text-[#777]"><svg class="size-4"><use href="#right"/></svg></td><td class="border-r-2 border-b-2 border-[#c1c1c1] bg-[#fffccc] pl-2">size</td><td class="border-b-2 border-[#c1c1c1] bg-[#fffccc] pl-2.5">200; 100</td></tr>
                    <tr class="h-9"><td class="pl-3 text-[#777]"><svg class="size-4"><use href="#right"/></svg></td><td class="border-r-2 border-b-2 border-[#c1c1c1] bg-[#fffccc] pl-2">minimum_size</td><td class="border-b-2 border-[#c1c1c1] bg-[#fffccc] pl-2.5">-1; -1</td></tr>
                    <tr class="h-9"><td class="pl-3 text-[#777]"><svg class="size-4"><use href="#right"/></svg></td><td class="border-r-2 border-b-2 border-[#c1c1c1] bg-[#fffccc] pl-2">maximum_size</td><td class="border-b-2 border-[#c1c1c1] bg-[#fffccc] pl-2.5">-1; -1</td></tr>
                    <tr class="h-9"><td></td><td class="border-r-2 border-[#c1c1c1] bg-[#fffccc]"></td><td class="bg-[#fffccc]"></td></tr>
                  </tbody>
                </table>
              </div>
              <div class="w-6 shrink-0 border-l-4 border-white bg-[#fafafa] pt-1.5 pl-1"><div class="h-[181px] w-3 rounded-full bg-[#c1c1c1]"></div></div>
            </div>
            <div class="h-0.5 shrink-0"></div>
            <div class="mx-0.5 mb-2 h-0.5 shrink-0 bg-[#b0b0b0]"></div>
            <div class="h-[195px] shrink-0 border-t-2 border-r-2 border-b-4 border-[#a8a8a8] pt-2 pl-1.5 text-[22px]/[34px]">
              <p class="font-bold">Python</p>
              <p>Generate Python Code</p>
            </div>
          </div>
        </section>
      </div>
    </div>
  </main>

  <!-- Status bar -->
  <footer class="flex h-[53px] shrink-0 items-center border-t-2 border-[#b4b4b4] bg-linear-to-b from-[#e8e8e8] to-[#d0d0d0] pb-0.5 text-[22px] text-[#444]">
    <p class="flex-1 pl-[755px]">/Users/night2004/Desktop/formbuilder_test/MainFrame.fbp</p>
    <p class="w-[590px]">Name: Window | Class: Panel</p>
  </footer>
</div>
</body>
</html>
